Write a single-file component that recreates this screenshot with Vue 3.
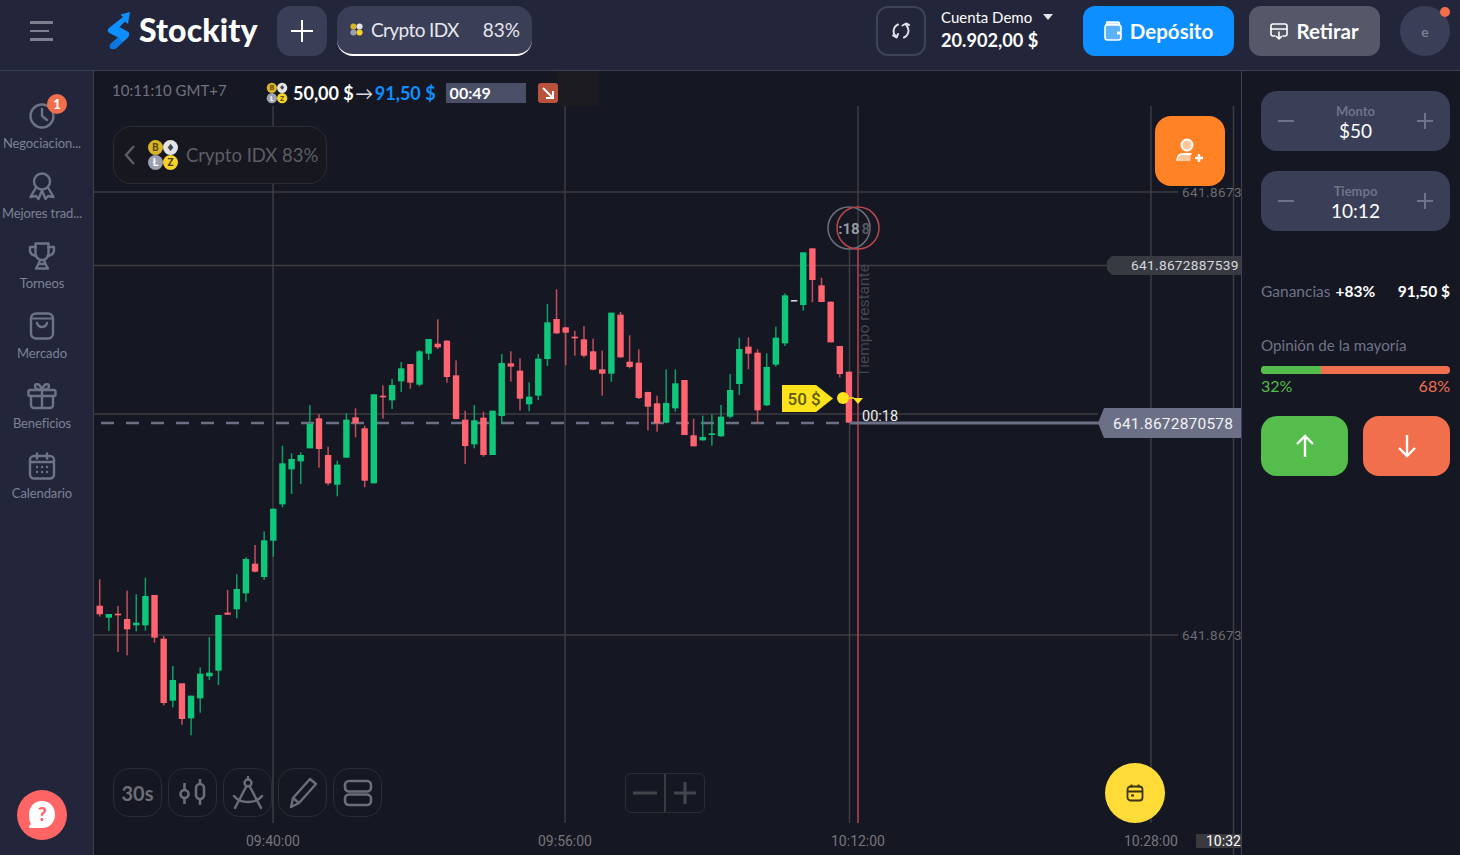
<script setup>
// candle values are read off the reference at 3x: [type, wickTop, wickBottom, bodyTop, bodyBottom]
const groups = [
  [500, [
    ['r', 238, 350, 317, 343], ['g', 342, 393, 342, 353], ['r', 318, 456, 341, 346], ['r', 272, 466, 357, 388],
    ['g', 283, 394, 368, 376], ['g', 233, 392, 288, 376], ['r', 285, 428, 285, 413], ['r', 408, 616, 416, 609],
    ['g', 498, 622, 540, 602], ['r', 550, 674, 550, 657], ['g', 587, 706, 587, 655], ['g', 502, 638, 521, 595],
    ['g', 411, 540, 518, 529], ['g', 345, 555, 345, 512], ['r', 270, 345, 338, 344], ['g', 223, 355, 267, 328],
    ['g', 172, 305, 177, 280], ['r', 135, 217, 191, 215], ['g', 94, 240, 121, 231], ['g', 26, 170, 26, 122]
  ]],
  [280, [
    ['g', 497, 682, 550, 673], ['g', 520, 642, 537, 568], ['g', 517, 612, 525, 544], ['g', 375, 505, 432, 505],
    ['r', 402, 563, 415, 507], ['r', 500, 616, 525, 610], ['g', 542, 649, 554, 614], ['g', 400, 533, 419, 533],
    ['r', 385, 472, 412, 430], ['r', 437, 622, 445, 602], ['g', 343, 610, 343, 610], ['r', 316, 416, 347, 352],
    ['g', 297, 387, 315, 361], ['g', 246, 336, 265, 304], ['r', 252, 326, 252, 308], ['g', 210, 319, 214, 314],
    ['g', 177, 240, 177, 221], ['r', 118, 207, 191, 202], ['r', 180, 308, 182, 291], ['r', 241, 418, 286, 417],
    ['r', 392, 552, 419, 498], ['g', 375, 505, 421, 493], ['r', 395, 530, 413, 525], ['g', 392, 525, 392, 525],
    ['g', 222, 430, 249, 408], ['r', 214, 305, 250, 260], ['r', 235, 392, 272, 356], ['g', 307, 394, 350, 373],
    ['g', 222, 360, 236, 347], ['g', 72, 258, 127, 237], ['r', 28, 162, 117, 160], ['r', 140, 256, 142, 158],
    ['r', 152, 227, 170, 175], ['r', 138, 232, 178, 227], ['r', 176, 271, 214, 269], ['r', 212, 347, 268, 281],
    ['g', 98, 305, 98, 281], ['r', 96, 233, 104, 232], ['r', 166, 265, 245, 261], ['r', 208, 357, 248, 354],
    ['r', 335, 451, 336, 380], ['r', 347, 455, 370, 430], ['g', 268, 430, 369, 428], ['g', 268, 395, 310, 385],
    ['r', 300, 465, 300, 465], ['r', 416, 499, 466, 499], ['g', 407, 482, 471, 481], ['g', 403, 497, 460, 465],
    ['g', 375, 470, 410, 469], ['g', 282, 415, 330, 410], ['g', 173, 345, 207, 312], ['r', 172, 268, 200, 221],
    ['r', 208, 430, 218, 391], ['g', 220, 378, 261, 376], ['g', 140, 260, 173, 254], ['g', 40, 198, 46, 190],
    ['w', 60, 64, 60, 64]
  ]],
  [190, [
    ['g', 187, 362, 187, 345], ['r', 175, 337, 175, 270], ['r', 263, 336, 286, 336],
    ['r', 335, 457, 335, 457], ['r', 468, 562, 468, 552], ['r', 545, 698, 545, 698]
  ]]
]

const candles = []
for (const [base, rows] of groups) {
  for (const [type, wt, wb, bt, bb] of rows) {
    const x = 99.7 + candles.length * 9.137
    candles.push({
      type,
      x,
      wickTop: base + wt / 3,
      wickBottom: base + wb / 3,
      bodyTop: base + bt / 3,
      bodyHeight: Math.max((bb - bt) / 3, 1.6)
    })
  }
}

const gridX = [273, 565, 1151]
const axisLabels = [
  { x: 273, text: '09:40:00' },
  { x: 565, text: '09:56:00' },
  { x: 858, text: '10:12:00' },
  { x: 1151, text: '10:28:00' }
]

// the four coins of the Crypto IDX asset, drawn three times
const coins = [
  { cx: 8.500, cy: 8.500, fill: '#d9b424', ink: '#5a4808', mark: 'B' },
  { cx: 23.500, cy: 8.500, fill: '#e4e4e8', ink: '#44464e', mark: '♦' },
  { cx: 8.500, cy: 23.500, fill: '#9ba1b0', ink: '#ffffff', mark: 'Ł' },
  { cx: 23.500, cy: 23.500, fill: '#f5d327', ink: '#4b4008', mark: 'Z' }
]

const navItems = [
  { label: 'Negociacion...', icon: 'clock', badge: 1 },
  { label: 'Mejores trad...', icon: 'ribbon' },
  { label: 'Torneos', icon: 'trophy' },
  { label: 'Mercado', icon: 'bag' },
  { label: 'Beneficios', icon: 'gift' },
  { label: 'Calendario', icon: 'calendar' }
]

const steppers = [
  { label: 'Monto', value: '$50' },
  { label: 'Tiempo', value: '10:12' }
]
</script>

<template>
  <div class="page">
    <header class="topbar">
      <button class="burger" aria-label="menu"><span></span><span class="short"></span><span></span></button>
      <div class="logo">
        <svg width="23" height="38" viewBox="0 0 23 38">
          <path d="M23 0L13.500 2.500 16 5 2 16C0 18 .5 20 2.500 21L11 25.500 4 31.500C1.500 34 3 38 7 37 9 37 9.500 36 11 34.500L21 25.500C23 23 22.500 20.500 20.500 19.500L12.500 15 18 9.500 21 12z" fill="#0d8fff" />
          <path d="M4 31.500L11 25.500 15.500 30 11 34.500C9.500 36 9 37 7 37 3 38 1.500 34 4 31.500z" fill="#0b76dc" />
        </svg>
        <span>Stockity</span>
      </div>
      <button class="add" aria-label="add">
        <svg width="24" height="24" viewBox="0 0 24 24"><path d="M12 1v22M1 12h22" stroke="#fff" stroke-width="2" /></svg>
      </button>
      <div class="tab">
        <svg class="tab-coins" width="13" height="15" viewBox="0 0 32 32">
          <g v-for="c in coins" :key="c.mark">
            <circle :cx="c.cx" :cy="c.cy" r="7.500" :fill="c.fill" />
          </g>
        </svg>
        <span class="tab-name">Crypto IDX</span>
        <span>83%</span>
      </div>

      <div class="account">
        <button class="swap" aria-label="swap">
          <svg width="20" height="22" viewBox="0 0 20 22" fill="none" stroke="#dfe1e8" stroke-width="2" stroke-linecap="round" stroke-linejoin="round">
            <path d="M7 4.500C3.500 6 1.500 10 3 14l2.500 3" />
            <path d="M2 15.500l3.500 2 1.500-3.500" />
            <path d="M13 17.500c3.500-1.500 5.500-5.500 4-9.500l-2-3.500" />
            <path d="M11.500 5.500l3.500-2 3 1.500" />
          </svg>
        </button>
        <div class="balance">
          <div class="balance-name">Cuenta Demo <i class="caret"></i></div>
          <div class="balance-value">20.902,00 $</div>
        </div>
      </div>

      <button class="cash deposit">
        <svg width="18" height="20" viewBox="0 0 18 20" fill="none">
          <path d="M3 1h11a1.500 1.500 0 0 1 1.500 1.500V4H2z" fill="#cfe7ff" stroke="#fff" stroke-width="1.400" />
          <rect x="1" y="4" width="16" height="15" rx="2.500" fill="#5db2ff" stroke="#fff" stroke-width="1.600" />
          <path d="M13 10.500h4v3h-4z" fill="#fff" />
        </svg>
        Depósito
      </button>
      <button class="cash withdraw">
        <svg width="18" height="18" viewBox="0 0 18 18" fill="none" stroke="#fff" stroke-width="1.600" stroke-linecap="round" stroke-linejoin="round">
          <path d="M5 14H3a2 2 0 0 1-2-2V4a2 2 0 0 1 2-2h12a2 2 0 0 1 2 2v8a2 2 0 0 1-2 2h-2" />
          <path d="M1 7h16M9 10v7M6.500 14.500L9 17l2.500-2.500" />
        </svg>
        Retirar
      </button>
      <div class="avatar">e<i class="dot"></i></div>
    </header>

    <div class="body">
      <nav class="sidebar">
        <div v-for="item in navItems" :key="item.label" class="nav-item">
          <div class="nav-icon">
            <svg width="30" height="30" viewBox="0 0 30 30" fill="none" stroke="#6f7388" stroke-width="2.400" stroke-linecap="round" stroke-linejoin="round">
              <template v-if="item.icon === 'clock'">
                <circle cx="15" cy="15" r="11.500" />
                <path d="M15 8v7l5 4" />
              </template>
              <template v-else-if="item.icon === 'ribbon'">
                <circle cx="15" cy="10.500" r="8" />
                <path d="M9 16.500L3.500 26l5.500-1 2.500 3 3.500-8.500 3.500 8.500 2.500-3 5.500 1L21 16.500" />
              </template>
              <template v-else-if="item.icon === 'trophy'">
                <path d="M8.500 2.500h13v10a6.500 6.500 0 0 1-13 0z" />
                <path d="M8.500 6H3v3c0 3 2.500 5.500 6.500 6M21.500 6H27v3c0 3-2.500 5.500-6.500 6" />
                <path d="M13 19l-1.500 4h7L17 19M9 27.500l2.500-4.500h7l2.500 4.500z" />
              </template>
              <template v-else-if="item.icon === 'bag'">
                <rect x="4" y="2.500" width="22" height="25" rx="5" />
                <path d="M4 7.500h22" stroke-width="1.800" />
                <path d="M10 12c1 3 3 4 5 4s4-1 5-4" />
              </template>
              <template v-else-if="item.icon === 'gift'">
                <rect x="1.500" y="9" width="27" height="6" rx="1.500" />
                <path d="M4 15v9a3 3 0 0 0 3 3h16a3 3 0 0 0 3-3v-9M15 9v18" />
                <path d="M15 9c-3 0-7-1-7-4 0-3 5-3 7 4 2-7 7-7 7-4 0 3-4 4-7 4z" />
              </template>
              <template v-else>
                <rect x="3" y="5" width="24" height="22.500" rx="4" />
                <path d="M3 11h24M10 2.500v5M20 2.500v5" />
                <path d="M10 16h.1M15 16h.1M20 16h.1M10 21h.1M15 21h.1M20 21h.1" />
              </template>
            </svg>
            <span v-if="item.badge" class="badge">{{ item.badge }}</span>
          </div>
          <div class="nav-label">{{ item.label }}</div>
        </div>
        <button class="help" aria-label="help">
          <svg width="32" height="32" viewBox="0 0 32 32">
            <path d="M16 2c8 0 13 6 13 13.500S24 29 16 29H4.500c-1.500 0-2-1.500-1-2.500l1.500-1.500C3.500 22.500 3 19 3 15.500 3 8 8 2 16 2z" fill="#fff" />
            <text x="16.500" y="22" class="help-mark">?</text>
          </svg>
        </button>
      </nav>

      <main class="chart">
        <svg class="plot" width="1147" height="784" viewBox="94 71 1147 784">
          <rect x="558" y="71" width="40" height="35" fill="#1b1b20" />
          <g stroke="#3d3d42" stroke-width="1.500">
            <path d="M94 192H1178M94 265.500H1107M94 414H1098M94 635H1178" />
            <path v-for="x in gridX" :key="x" :d="`M${x} 106V823`" />
            <path d="M1233.500 106V855M858 106V249M849.500 249V823" />
          </g>
          <path d="M858 249V823" stroke="#b8474f" stroke-width="1.500" />

          <text x="864" y="372" transform="rotate(-90 869 372)" class="remaining">Tiempo restante</text>

          <path d="M101 423H850" stroke="#6b7084" stroke-width="2.500" stroke-dasharray="13 12" />

          <g v-for="(c, i) in candles" :key="i" :class="c.type">
            <rect :x="c.x - 0.750" :y="c.wickTop" width="1.500" :height="c.wickBottom - c.wickTop" class="wick" />
            <rect :x="c.x - 3.200" :y="c.bodyTop" width="6.400" :height="c.bodyHeight" class="candle" />
          </g>

          <path d="M850 423H1100" stroke="#6b7084" stroke-width="3" />

          <circle cx="849" cy="228" r="21" fill="none" stroke="#6e7078" stroke-width="1.500" />
          <circle cx="858" cy="228" r="21" fill="none" stroke="#b8474f" stroke-width="1.500" />
          <text x="849" y="234" class="timer-a">:18</text>
          <text x="861.500" y="234" class="timer-b">8</text>

          <path d="M782 385h34l17 13.500-17 13.500h-34z" fill="#ffe31a" />
          <text x="787.500" y="405" class="stake">50 $</text>
          <circle cx="843" cy="398" r="6" fill="#ffe31a" />
          <path d="M849 398h5" stroke="#ffe31a" stroke-width="1.500" />
          <path d="M853 398h10l-5 6z" fill="#ffe31a" />
          <text x="862" y="421" class="countdown">00:18</text>

          <path d="M1107 261l5-5h129v19h-129l-5-5z" fill="#383a42" />
          <text x="1131" y="270" class="price">641.8672887539</text>
          <path d="M1098 423l6-15h137v30h-137z" fill="#6b7086" />
          <text x="1113" y="428.500" class="price-now">641.8672870578</text>

          <text x="1182" y="197" class="axis-y">641.8673</text>
          <text x="1182" y="640" class="axis-y">641.8673</text>

          <text v-for="a in axisLabels" :key="a.text" :x="a.x" y="846" text-anchor="middle" class="axis-x">{{ a.text }}</text>
          <rect x="1196" y="834" width="45" height="14" fill="#3a3a3e" />
          <text x="1206" y="846" class="axis-now">10:32</text>
        </svg>

        <div class="clock-line">10:11:10 GMT+7</div>
        <div class="trade">
          <svg width="22" height="22" viewBox="0 0 32 32">
            <g v-for="c in coins" :key="c.mark">
              <circle :cx="c.cx" :cy="c.cy" r="7.500" :fill="c.fill" />
              <text :x="c.cx" :y="c.cy + 3.500" class="coin-text" :fill="c.ink">{{ c.mark }}</text>
            </g>
          </svg>
          <span class="trade-in">50,00 $</span>
          <span class="trade-arrow">→</span>
          <span class="trade-out">91,50 $</span>
          <span class="trade-timer">00:49</span>
          <span class="trade-dir">
            <svg width="14" height="14" viewBox="0 0 14 14" fill="none" stroke="#fff" stroke-width="2"><path d="M2 2l9 9M12 5v7H5" /></svg>
          </span>
        </div>

        <div class="asset-pill">
          <svg class="pill-back" width="11" height="20" viewBox="0 0 11 20" fill="none" stroke="#5c5e66" stroke-width="2.400"><path d="M10 1L2 10l8 9" /></svg>
          <svg width="32" height="32" viewBox="0 0 32 32">
            <g v-for="c in coins" :key="c.mark">
              <circle :cx="c.cx" :cy="c.cy" r="7.500" :fill="c.fill" />
              <text :x="c.cx" :y="c.cy + 3.500" class="coin-text" :fill="c.ink">{{ c.mark }}</text>
            </g>
          </svg>
          <span>Crypto IDX 83%</span>
        </div>

        <button class="invite" aria-label="invite">
          <svg width="30" height="30" viewBox="0 0 30 30" fill="none">
            <circle cx="12" cy="9" r="5.500" fill="#ffc79b" stroke="#fff" stroke-width="2" />
            <path d="M2.500 25v-2c0-3 2.500-5 5-5h9" stroke="#fff" stroke-width="2" />
            <path d="M3.500 25v-2c0-2.500 2-4 4-4h8v6z" fill="#ffc79b" />
            <path d="M24 18v8M20 22h8" stroke="#fff" stroke-width="2.400" />
          </svg>
        </button>

        <div class="tools">
          <button class="tool tool-text">30s</button>
          <button class="tool">
            <svg width="30" height="30" viewBox="0 0 30 30" fill="none" stroke="#6b6e78" stroke-width="2.600">
              <rect x="2.500" y="12" width="8" height="8" rx="4" />
              <path d="M6.500 5v7M6.500 20v6" />
              <rect x="18" y="6" width="8" height="15" rx="4" />
              <path d="M22 1v5M22 21v6" />
            </svg>
          </button>
          <button class="tool">
            <svg width="32" height="34" viewBox="0 0 32 34" fill="none" stroke="#6b6e78" stroke-width="2.400" stroke-linejoin="round" stroke-linecap="round">
              <circle cx="16" cy="7" r="3.500" />
              <path d="M16 1v2.500M14.500 10L3 32M17.500 10L29 32" />
              <path d="M2 20c4 5 9 6 14 6s10-1 14-6" />
            </svg>
          </button>
          <button class="tool">
            <svg width="30" height="32" viewBox="0 0 30 32" fill="none" stroke="#6b6e78" stroke-width="2.400" stroke-linejoin="round">
              <path d="M22 2l6 5-17 19-8 4 2-9z" />
              <path d="M5 21l6 5" />
            </svg>
          </button>
          <button class="tool">
            <svg width="30" height="30" viewBox="0 0 30 30" fill="none" stroke="#6b6e78" stroke-width="2.600">
              <rect x="2" y="3" width="26" height="10.500" rx="4" />
              <rect x="2" y="16.500" width="26" height="10.500" rx="4" />
            </svg>
          </button>
        </div>

        <div class="zoom-box">
          <button class="zoom-btn" aria-label="zoom out">
            <svg width="24" height="24" viewBox="0 0 24 24"><path d="M0 12h24" stroke="#44464e" stroke-width="3" /></svg>
          </button>
          <button class="zoom-btn divided" aria-label="zoom in">
            <svg width="24" height="24" viewBox="0 0 24 24"><path d="M1 12h22M12 1v22" stroke="#44464e" stroke-width="3" /></svg>
          </button>
        </div>

        <button class="calendar" aria-label="calendar">
          <svg width="18" height="18" viewBox="0 0 18 18" fill="none" stroke="#3c3312" stroke-width="1.800">
            <rect x="1.500" y="2.500" width="15" height="14" rx="3" />
            <path d="M1.500 7.500h15M5.500 .5v3M12.500 .5v3M5 11.500h3" />
          </svg>
        </button>
      </main>

      <aside class="panel">
        <div v-for="s in steppers" :key="s.label" class="stepper">
          <svg width="18" height="18" viewBox="0 0 18 18"><path d="M1 9h16" stroke="#6f7388" stroke-width="2" /></svg>
          <div class="stepper-mid">
            <div class="stepper-label">{{ s.label }}</div>
            <div class="stepper-value">{{ s.value }}</div>
          </div>
          <svg width="18" height="18" viewBox="0 0 18 18"><path d="M1 9h16M9 1v16" stroke="#6f7388" stroke-width="2" /></svg>
        </div>

        <div class="profit">
          <span class="muted">Ganancias</span>
          <b class="pct">+83%</b>
          <b class="total">91,50 $</b>
        </div>

        <div class="opinion-title muted">Opinión de la mayoría</div>
        <div class="opinion-bar"><i></i></div>
        <div class="opinion-nums"><span class="up">32%</span><span class="down">68%</span></div>

        <div class="actions">
          <button class="action call" aria-label="up">
            <svg width="20" height="24" viewBox="0 0 20 24" fill="none" stroke="#fff" stroke-width="2.400"><path d="M10 23V2M2 10l8-8 8 8" /></svg>
          </button>
          <button class="action put" aria-label="down">
            <svg width="20" height="24" viewBox="0 0 20 24" fill="none" stroke="#fff" stroke-width="2.400"><path d="M10 1v21M2 14l8 8 8-8" /></svg>
          </button>
        </div>
      </aside>
    </div>
  </div>
</template>

<style>
html, body { margin: 0; background: #151722; }
</style>

<style scoped>
.page {
  width: 1460px;
  height: 855px;
  display: flex;
  flex-direction: column;
  overflow: hidden;
  font-family: Lato, "Noto Sans", sans-serif;
  color: #fff;
  background: #151722;
}
.coin-text { font: 700 10px Roboto, "DejaVu Sans", sans-serif; text-anchor: middle; }
button { border: 0; padding: 0; font-family: inherit; color: inherit; background: none; }

.topbar {
  height: 70px;
  flex: none;
  box-sizing: content-box;
  padding-bottom: 0;
  display: flex;
  align-items: flex-start;
  padding-top: 0;
  background: #23263a;
  border-bottom: 1px solid #3c4056;
}
.topbar > * { margin-top: 6px; }
.burger {
  width: 23px;
  height: 50px;
  margin-left: 30px;
  display: flex;
  flex-direction: column;
  justify-content: center;
  gap: 6px;
}
.burger span { display: block; height: 2.500px; background: #7b7f90; }
.burger .short { width: 19px; }
.logo {
  margin-left: 54px;
  width: 170px;
  height: 50px;
  display: flex;
  align-items: center;
  gap: 9px;
  font-size: 32px;
  font-weight: 900;
  letter-spacing: 0.1px;
}
.logo span { margin-bottom: 3px; }
.add {
  width: 50px;
  height: 50px;
  border-radius: 14px;
  background: #3a3e56;
  display: flex;
  align-items: center;
  justify-content: center;
}
.tab {
  margin-left: 10px;
  width: 195px;
  height: 50px;
  box-sizing: border-box;
  padding: 0 12px 2px 13px;
  display: flex;
  align-items: center;
  border-radius: 16px;
  background: #3a3e56;
  border-bottom: 2px solid #fff;
  font-size: 19px;
  color: #e6e7ee;
}
.tab-coins { margin-right: 8px; }
.tab-name { flex: 1; letter-spacing: -0.6px; }
.account { margin-left: auto; display: flex; align-items: center; }
.swap {
  width: 50px;
  height: 50px;
  box-sizing: border-box;
  border: 2px solid #3f4358;
  border-radius: 12px;
  display: flex;
  align-items: center;
  justify-content: center;
}
.balance { margin: 0 0 4px 15px; width: 142px; }
.balance-name { font-size: 15px; line-height: 22px; }
.caret {
  display: inline-block;
  margin-left: 7px;
  vertical-align: 3px;
  border: 5px solid transparent;
  border-top: 6px solid #e6e7ee;
  border-bottom: 0;
}
.balance-value { font-size: 18.200px; font-weight: 700; line-height: 24px; }
.cash {
  height: 50px;
  border-radius: 12px;
  display: flex;
  align-items: center;
  justify-content: center;
  gap: 8px;
  font-size: 20.500px;
  font-weight: 700;
  color: #fff;
}
.deposit { width: 151px; background: #0d8fff; }
.withdraw { width: 131px; margin-left: 15px; background: #545869; }
.avatar {
  position: relative;
  width: 50px;
  height: 50px;
  margin: 6px 10px 0 20px;
  border-radius: 50%;
  background: #3a3e56;
  color: #7b7f90;
  font-size: 14px;
  font-weight: 700;
  display: flex;
  align-items: center;
  justify-content: center;
}
.dot {
  position: absolute;
  top: 1px;
  right: 0;
  width: 10px;
  height: 10px;
  border-radius: 50%;
  background: #f26f4e;
}

.body { flex: 1; display: flex; min-height: 0; }

.sidebar {
  position: relative;
  width: 84px;
  flex: none;
  box-sizing: content-box;
  padding: 29px 9px 0 0;
  background: #23263a;
  border-right: 1px solid #3c4056;
  display: flex;
  flex-direction: column;
  align-items: center;
}
.nav-item { height: 70px; width: 100%; display: flex; flex-direction: column; align-items: center; }
.nav-icon { position: relative; height: 32px; display: flex; align-items: center; }
.nav-label {
  margin-top: 3px;
  font-size: 13px;
  line-height: 16px;
  color: #7d8196;
  white-space: nowrap;
  letter-spacing: -0.1px;
}
.badge {
  position: absolute;
  top: -6px;
  right: -10px;
  width: 20px;
  height: 20px;
  border-radius: 50%;
  background: #f26f4e;
  color: #fff;
  font-size: 13px;
  font-weight: 900;
  line-height: 20px;
  text-align: center;
}
.help {
  position: absolute;
  left: 17px;
  bottom: 15px;
  width: 50px;
  height: 50px;
  border-radius: 50%;
  background: #ff6565;
  display: flex;
  align-items: center;
  justify-content: center;
}
.help-mark { font: 900 19px Lato, sans-serif; fill: #ff6565; text-anchor: middle; }

.chart {
  position: relative;
  width: 1147px;
  flex: none;
  overflow: hidden;
  background: #151722;
}
.plot { position: absolute; inset: 0; display: block; }
.g .candle { fill: #0fc77a; }
.g .wick { fill: #0f9e63; }
.r .candle { fill: #ff6470; }
.r .wick { fill: #c04f5a; }
.w .candle { fill: #d4d5dc; }
.w .wick { fill: none; }
.remaining { font: 15.500px Roboto, sans-serif; fill: #454750; }
.timer-a { font: 700 15px Roboto, sans-serif; fill: #9a9ba2; text-anchor: middle; }
.timer-b { font: 700 15px Roboto, sans-serif; fill: #55565e; }
.stake { font: 500 17px Roboto, sans-serif; fill: #5c5a12; }
.countdown { font: 14.500px Roboto, sans-serif; fill: #eceded; }
.price { font: 13.700px Roboto, sans-serif; fill: #d8d9de; letter-spacing: 0.3px; }
.price-now { font: 15.500px Roboto, sans-serif; fill: #f1f2f5; letter-spacing: 0.2px; }
.axis-y { font: 13.500px Roboto, sans-serif; fill: #6b6c72; letter-spacing: 0.4px; }
.axis-x { font: 14px Roboto, sans-serif; fill: #75767c; }
.axis-now { font: 14px Roboto, sans-serif; fill: #fff; }

.clock-line {
  position: absolute;
  left: 18px;
  top: 9px;
  font-size: 15px;
  line-height: 20px;
  color: #6f7280;
}
.trade {
  position: absolute;
  left: 172px;
  top: 11px;
  height: 22px;
  display: flex;
  align-items: center;
  font-size: 18px;
  font-weight: 700;
}
.trade-in { margin-left: 5px; }
.trade-arrow { font-weight: 400; color: #d8d9de; padding: 0 1.500px; }
.trade-out { color: #0d8fff; }
.trade-timer {
  margin-left: 10px;
  width: 76px;
  height: 20px;
  padding-left: 4px;
  background: #4a4e66;
  font-size: 16px;
  line-height: 20px;
  color: #fff;
}
.trade-dir {
  margin-left: 12px;
  width: 20px;
  height: 20px;
  border-radius: 3px;
  background: #b8523c;
  display: flex;
  align-items: center;
  justify-content: center;
}
.asset-pill {
  position: absolute;
  left: 19px;
  top: 55px;
  width: 214px;
  height: 58px;
  box-sizing: border-box;
  padding-left: 10px;
  display: flex;
  align-items: center;
  gap: 7px;
  border: 1.500px solid #2b2d35;
  border-radius: 18px;
  background: #16171f;
  font-size: 18.500px;
  color: #5c5e66;
  white-space: nowrap;
}
.pill-back { margin-right: 5px; }
.invite {
  position: absolute;
  left: 1061px;
  top: 45px;
  width: 70px;
  height: 70px;
  border-radius: 16px;
  background: #ff8225;
  display: flex;
  align-items: center;
  justify-content: center;
}
.tools {
  position: absolute;
  left: 19px;
  top: 697px;
  display: flex;
  gap: 6px;
}
.tool {
  width: 49px;
  height: 49px;
  box-sizing: border-box;
  border: 1.500px solid #2b2d35;
  border-radius: 16px;
  background: #151722;
  display: flex;
  align-items: center;
  justify-content: center;
}
.tool-text { font-size: 20px; font-weight: 700; color: #6b6e78; }
.zoom-box {
  position: absolute;
  left: 531px;
  top: 702px;
  width: 80px;
  height: 40px;
  box-sizing: border-box;
  border: 1.500px solid #2b2d35;
  border-radius: 6px;
  display: flex;
}
.zoom-btn {
  flex: 1;
  display: flex;
  align-items: center;
  justify-content: center;
}
.divided { border-left: 2px solid #3a3b40; }
.calendar {
  position: absolute;
  left: 1011px;
  top: 692px;
  width: 60px;
  height: 60px;
  border-radius: 50%;
  background: #ffdc37;
  display: flex;
  align-items: center;
  justify-content: center;
}

.panel {
  flex: 1;
  box-sizing: border-box;
  padding: 20px 10px 0 19px;
  border-left: 1px solid #3c4056;
  background: #151722;
}
.stepper {
  height: 60px;
  box-sizing: border-box;
  margin-bottom: 20px;
  padding: 0 16px;
  display: flex;
  align-items: center;
  justify-content: space-between;
  border-radius: 16px;
  background: #3a3e56;
}
.stepper-mid { text-align: center; padding-top: 3px; }
.stepper-label { font-size: 13px; font-weight: 700; line-height: 16px; color: #6f7388; }
.stepper-value { font-size: 19px; line-height: 24px; color: #fff; }
.profit {
  margin-top: 49px;
  display: flex;
  align-items: center;
  font-size: 15.500px;
  line-height: 22px;
}
.muted { color: #6f7388; }
.pct { margin-left: 5px; }
.total { margin-left: auto; }
.opinion-title { margin-top: 32px; font-size: 15.200px; line-height: 22px; }
.opinion-bar {
  margin-top: 10px;
  height: 8px;
  border-radius: 4px;
  overflow: hidden;
  background: #f26f4e;
}
.opinion-bar i { display: block; width: 32%; height: 100%; background: #54bd4b; }
.opinion-nums {
  display: flex;
  justify-content: space-between;
  font-size: 16px;
  line-height: 24px;
}
.up { color: #54bd4b; }
.down { color: #f26f4e; }
.actions { margin-top: 18px; display: flex; justify-content: space-between; }
.action {
  width: 87px;
  height: 60px;
  border-radius: 16px;
  display: flex;
  align-items: center;
  justify-content: center;
}
.call { background: #54bd4b; }
.put { background: #f26f4e; }
</style>
